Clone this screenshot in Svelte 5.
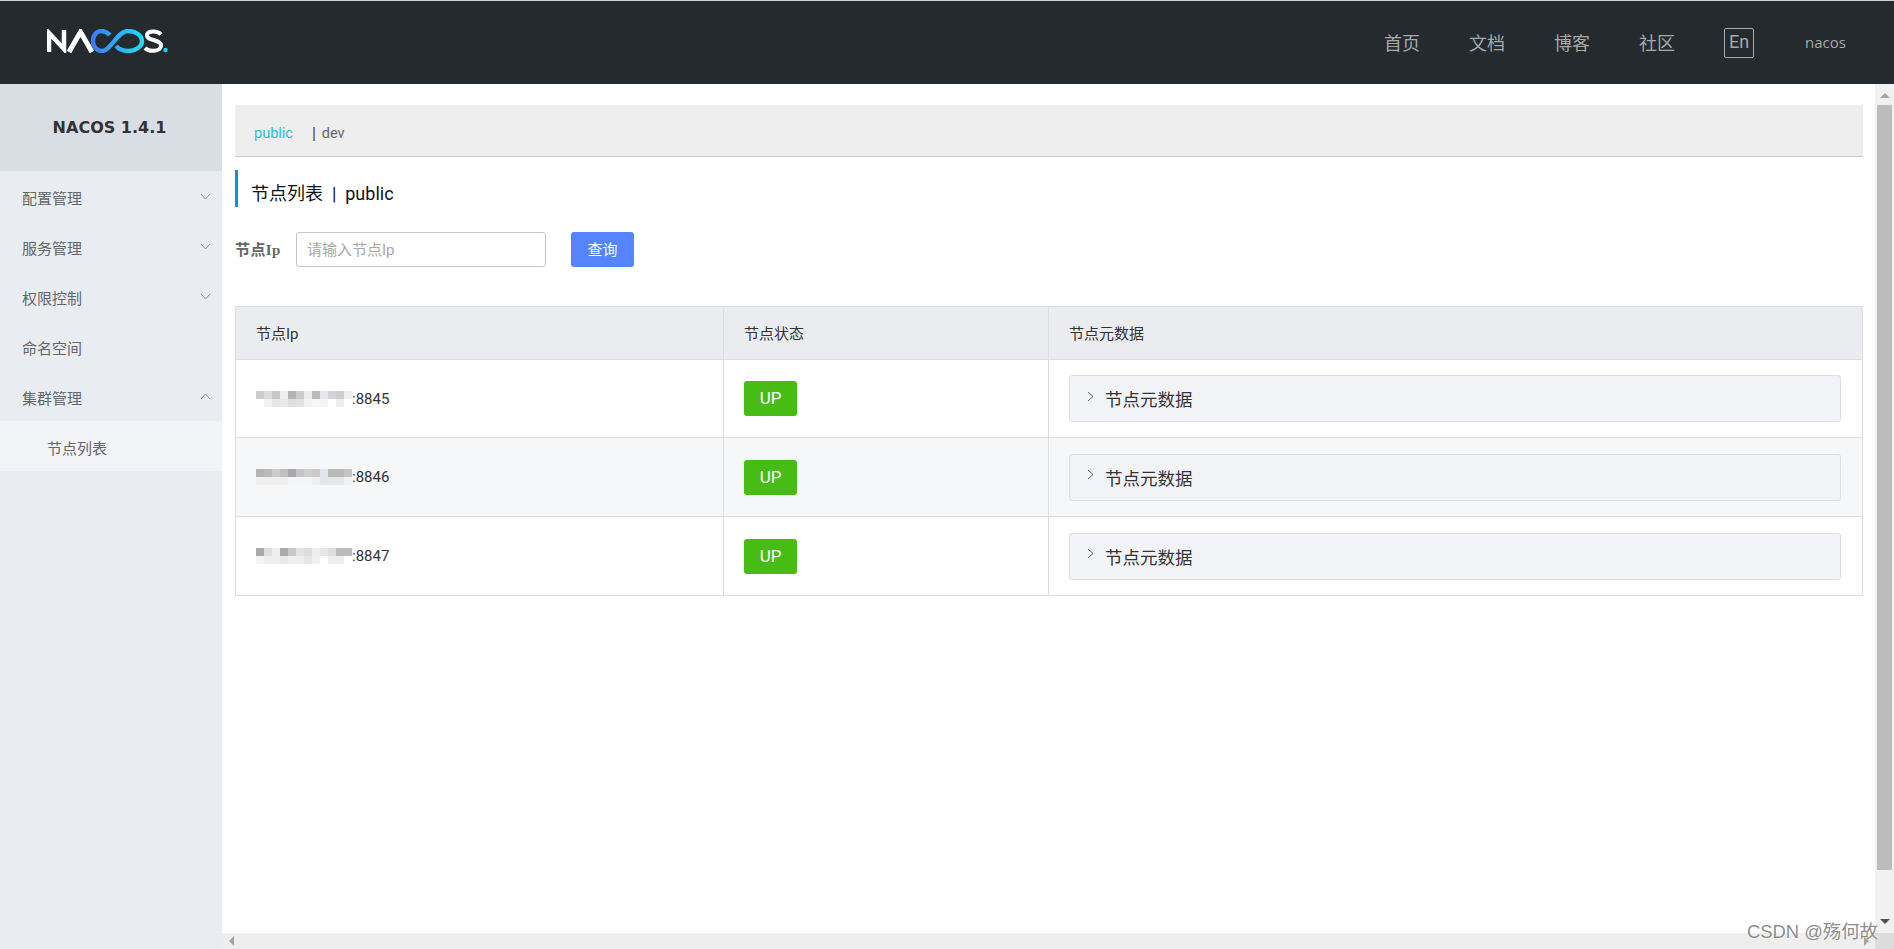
<script>
  const navLinks = ['首页', '文档', '博客', '社区'];
  const menu = [
    { label: '配置管理', arrow: 'down' },
    { label: '服务管理', arrow: 'down' },
    { label: '权限控制', arrow: 'down' },
    { label: '命名空间' },
    { label: '集群管理', arrow: 'up' }
  ];
  // 打码区域: two rows of grey squares in front of each port
  const rows = [
    {
      port: '8845',
      cells: ['#ccc', '#ddd', '#c6c6c6', '#eee', '#b4b4b4', '#ccc', '#eee', '#bbb', '#e4e8ee', '#d4d4d4', '#ccc', '#eee',
              '#fff', '#f2f2f2', '#e6e6e6', '#e9e9e9', '#dedede', '#e2e2e2', '#f2f2f2', '#f8f8f8', '#f4f4f4', '#fff', '#eee', '#fff']
    },
    {
      port: '8846',
      cells: ['#b4b4b4', '#bbb', '#ccc', '#c0c0c0', '#a8a8a8', '#c4c4cc', '#cfcfcf', '#cfc8c8', '#e0e6ec', '#b8b8b8', '#b8b8b8', '#c4c4c4',
              '#f0f0f0', '#f0f0f0', '#f0f0f0', '#eee', '#f4f5f7', '#f4f5f7', '#f4f5f7', '#eef0f2', '#e0e6ea', '#e4e8ea', '#e4e8ea', '#f0f2f4']
    },
    {
      port: '8847',
      cells: ['#aaa', '#ddd', '#eee', '#aaa', '#c8c8c8', '#e4e4e4', '#ddd', '#eee', '#e4e8ee', '#ddd', '#bbb', '#bbb',
              '#f4f4f4', '#eee', '#eee', '#e8e8e8', '#eee', '#eee', '#e6e6e6', '#f0f0f0', '#fff', '#eee', '#eee', '#fff']
    }
  ];
</script>

<div class="page">
  <header class="topbar">
    <svg class="logo" width="121" height="24" viewBox="0 0 121 24" role="img" aria-label="NACOS">
      <defs>
        <linearGradient id="inf" x1="0" x2="1" y1="0" y2="0">
          <stop offset="0" stop-color="#3f7bf8" />
          <stop offset="1" stop-color="#1fdcf5" />
        </linearGradient>
      </defs>
      <path d="M2 23V4L17 20V1" fill="none" stroke="#fff" stroke-width="4.5" />
      <path d="M22 23L33.5 3L45 23" fill="none" stroke="#fff" stroke-width="5" />
      <path d="M63 6C60 3 57 2 54 2C49 2 46 7 46 12C46 18 50 22 55 22C64 22 70 2 81 2C88 2 95 6 95 12C95 18 88 22 81 22C76 22 72 20 69 17"
        fill="none" stroke="url(#inf)" stroke-width="4.4" />
      <path d="M114 5.5C111 2 101 1 100 6C99 12 115 10 114 17C113 23 102 23 98 19" fill="none" stroke="#fff" stroke-width="4" />
      <circle cx="118.5" cy="21" r="2.2" fill="#1fd2ee" />
    </svg>
    <nav class="links">
      {#each navLinks as link}
        <a href="#top">{link}</a>
      {/each}
      <span class="lang">En</span>
      <span class="user">nacos</span>
    </nav>
  </header>

  <div class="body">
    <aside class="side">
      <div class="brand">NACOS 1.4.1</div>
      {#each menu as item}
        <div class="menu-item">
          <span>{item.label}</span>
          {#if item.arrow}
            <svg class="chev" class:flip={item.arrow === 'up'} width="11" height="7" viewBox="0 0 11 7">
              <path d="M1 1l4.5 5L10 1" fill="none" stroke="#8a8f99" />
            </svg>
          {/if}
        </div>
      {/each}
      <div class="sub-item">节点列表</div>
    </aside>

    <div class="main">
      <div class="scroll-row">
        <main class="content">
          <div class="tabs">
            <span class="tab-on">public</span>
            <span class="sep">|</span>
            <span class="tab">dev</span>
          </div>
          <h1 class="title">节点列表&nbsp; | &nbsp;public</h1>
          <form class="search">
            <label for="ip">节点Ip</label>
            <input id="ip" placeholder="请输入节点Ip" />
            <button type="button">查询</button>
          </form>
          <table>
            <thead>
              <tr>
                <th class="c1">节点Ip</th>
                <th class="c2">节点状态</th>
                <th>节点元数据</th>
              </tr>
            </thead>
            <tbody>
              {#each rows as row}
                <tr>
                  <td>
                    <span class="ip">
                      <span class="mosaic">
                        {#each row.cells as c}
                          <i style="background:{c}"></i>
                        {/each}
                      </span>:{row.port}
                    </span>
                  </td>
                  <td><span class="status">UP</span></td>
                  <td>
                    <div class="panel">
                      <svg width="7" height="11" viewBox="0 0 7 11"><path d="M1 1l5 4.5L1 10" fill="none" stroke="#666" /></svg>
                      <span>节点元数据</span>
                    </div>
                  </td>
                </tr>
              {/each}
            </tbody>
          </table>
        </main>
        <div class="vbar">
          <b class="tri tri-up"></b>
          <div class="thumb"></div>
          <b class="tri tri-down"></b>
        </div>
      </div>
      <div class="hbar">
        <b class="tri tri-left"></b>
        <b class="tri tri-right"></b>
        <div class="corner"></div>
      </div>
    </div>
  </div>

  <div class="mark">CSDN @殇何故</div>
</div>

<style>
  :global(body) {
    background: #fff;
  }
  .page {
    position: relative;
    height: 949px;
    overflow: hidden;
    display: flex;
    flex-direction: column;
    border-top: 1px solid #d4d4d4;
    box-sizing: border-box;
    font-family: Roboto, "Noto Sans CJK SC", sans-serif;
    color: #333;
  }
  .topbar {
    flex: none;
    height: 83px;
    background: #252a2f;
    display: flex;
    align-items: center;
    justify-content: space-between;
  }
  .logo {
    margin-left: 47px;
    margin-top: -4px;
  }
  .links {
    display: flex;
    align-items: center;
    padding-right: 48px;
    font-size: 18px;
    color: #a6a9ab;
  }
  .links a {
    color: inherit;
    text-decoration: none;
    width: 85px;
    padding-bottom: 2px;
  }
  .lang {
    box-sizing: border-box;
    width: 30px;
    height: 30px;
    border: 1px solid #a6a9ab;
    border-radius: 2px;
    line-height: 26px;
    text-align: center;
    font-size: 18px;
  }
  .user {
    margin-left: 51px;
    font: 15px "Open Sans", sans-serif;
    width: 41px;
    padding-bottom: 2px;
  }

  .body {
    flex: 1;
    display: flex;
    min-height: 0;
  }
  .side {
    flex: none;
    width: 222px;
    background: #e9edf2;
  }
  .brand {
    height: 87px;
    background: #d9dee5;
    text-align: center;
    font: 700 16px/88px "DejaVu Sans", sans-serif;
    padding-right: 3px;
    box-sizing: border-box;
  }
  .menu-item {
    height: 50px;
    padding: 0 11px 0 22px;
    display: flex;
    align-items: center;
    justify-content: space-between;
    font-size: 15px;
    color: #666;
  }
  .menu-item span {
    padding-top: 2px;
  }
  .chev.flip {
    transform: rotate(180deg);
  }
  .sub-item {
    height: 50px;
    line-height: 56px;
    padding-left: 47px;
    background: #f2f3f7;
    font-size: 15px;
    color: #666;
  }

  .main {
    flex: 1;
    min-width: 0;
    display: flex;
    flex-direction: column;
  }
  .scroll-row {
    flex: 1;
    min-height: 0;
    display: flex;
  }
  .content {
    flex: 1;
    min-width: 0;
    padding: 21px 12px 0 13px;
  }
  .tabs {
    height: 51px;
    background: #eee;
    border-bottom: 1px solid #ccc;
    padding-left: 19px;
    display: flex;
    align-items: center;
    font-size: 14.5px;
    color: #666;
  }
  .tabs span {
    padding-top: 6px;
  }
  .tab-on {
    color: #1fc4e2;
    margin-right: 19px;
  }
  .sep {
    color: #553a2a;
    margin-right: 6px;
    font-size: 16px;
  }
  .title {
    margin: 13px 0 0;
    height: 37px;
    border-left: 3px solid #09c;
    padding-left: 13px;
    font-size: 18px;
    font-weight: 400;
    line-height: 47px;
    color: #111;
  }
  .search {
    margin-top: 25px;
    display: flex;
    align-items: center;
    height: 35px;
  }
  .search label {
    width: 61px;
    font: 700 15px "Liberation Serif", "Noto Sans CJK SC", serif;
    letter-spacing: 0.4px;
    color: #666;
    padding-bottom: 2px;
  }
  .search input {
    box-sizing: border-box;
    width: 250px;
    height: 35px;
    border: 1px solid #c4c6cf;
    border-radius: 3px;
    padding: 0 10px 0;
    font: 15px Roboto, "Noto Sans CJK SC", sans-serif;
    outline: none;
  }
  .search input::placeholder {
    color: #a8a8a8;
  }
  .search button {
    margin-left: 25px;
    width: 63px;
    height: 35px;
    border: 0;
    border-radius: 3px;
    background: #5584ff;
    color: #fff;
    padding: 0 0 2px;
    font: 15px Roboto, "Noto Sans CJK SC", sans-serif;
  }

  table {
    margin-top: 39px;
    width: 100%;
    table-layout: fixed;
    border-collapse: collapse;
    font-size: 15px;
  }
  th, td {
    border: 1px solid #dcdee3;
    padding: 0 20px;
    text-align: left;
    font-weight: 400;
    color: #333;
  }
  td:last-child {
    padding-right: 21px;
  }
  .c1 {
    width: 447px;
  }
  .c2 {
    width: 284px;
  }
  th {
    height: 51px;
    background: #ebecf0;
    padding-bottom: 1px;
  }
  td {
    height: 78px;
  }
  tbody tr:first-child td {
    height: 77px;
  }
  tbody tr:nth-child(2) td {
    background: #f6f7f9;
  }
  .ip {
    display: flex;
    align-items: center;
  }
  .mosaic {
    flex: none;
    width: 96px;
    height: 16px;
    display: grid;
    grid-template-columns: repeat(12, 8px);
    grid-auto-rows: 8px;
  }
  .status {
    display: block;
    width: 53px;
    height: 35px;
    line-height: 35px;
    text-align: center;
    border-radius: 3px;
    background: #46bc15;
    color: #fff;
    font-size: 17px;
  }
  .panel {
    height: 47px;
    box-sizing: border-box;
    background: #f2f3f7;
    border: 1px solid #dcdee3;
    border-radius: 3px;
    display: flex;
    align-items: center;
    padding-left: 17px;
    gap: 11px;
    font-size: 17.5px;
    color: #333;
  }
  .panel svg {
    margin-top: -5px;
  }

  .vbar {
    flex: none;
    width: 19px;
    background: #f1f1f1;
    display: flex;
    flex-direction: column;
    align-items: center;
  }
  .thumb {
    flex: none;
    width: 15px;
    height: 765px;
    margin-top: 7px;
    background: #bcbcbc;
  }
  .tri {
    display: block;
    width: 0;
    height: 0;
    border: 5px solid transparent;
  }
  .tri-up {
    margin-top: 9px;
    border-top: 0;
    border-bottom: 5px solid #a3a3a3;
  }
  .tri-down {
    margin-top: 49px;
    border-bottom: 0;
    border-top: 5px solid #505050;
  }
  .hbar {
    flex: none;
    height: 16px;
    background: #eee;
    display: flex;
    align-items: center;
    padding-left: 7px;
  }
  .tri-left {
    border-left: 0;
    border-right: 5px solid #a3a3a3;
  }
  .tri-right {
    margin-left: auto;
    margin-right: 6px;
    border-right: 0;
    border-left: 5px solid #a3a3a3;
  }
  .corner {
    width: 19px;
    height: 16px;
    background: #dcdcdc;
  }
  .mark {
    position: absolute;
    right: 16px;
    bottom: 6px;
    font: 18.4px "Liberation Sans", "Noto Sans CJK SC", sans-serif;
    color: #8e8e8e;
    text-shadow: 0 0 2px #fff;
  }
</style>
